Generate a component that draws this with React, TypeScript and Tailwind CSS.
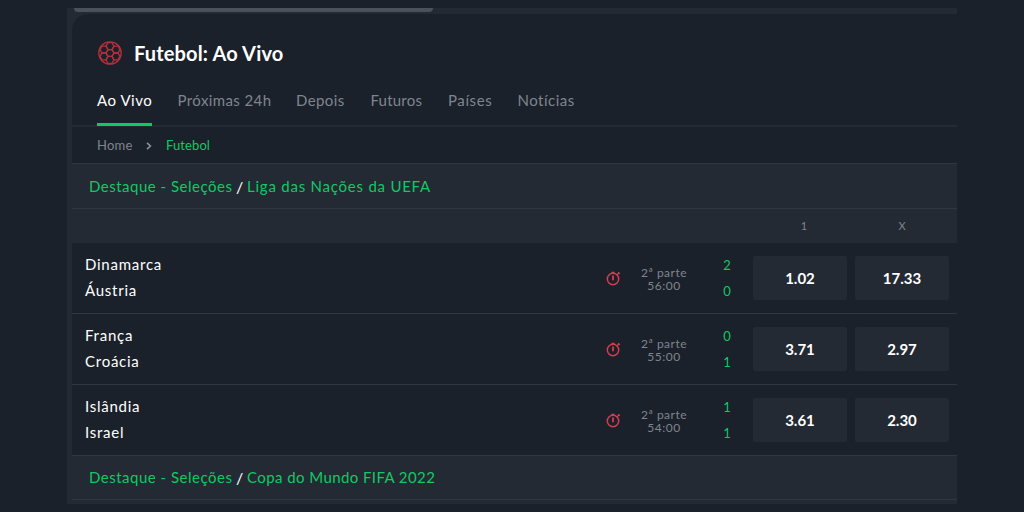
const tabs = [
  { label: "Ao Vivo", size: "w-[55px] tracking-[0.55px]" },
  { label: "Próximas 24h", size: "w-[93px] tracking-[0.4px]" },
  { label: "Depois", size: "w-[49px] tracking-[0.4px]" },
  { label: "Futuros", size: "w-[52px] tracking-[0.2px]" },
  { label: "Países", size: "w-[44px] tracking-[0.6px]" },
  { label: "Notícias", size: "w-[57px] tracking-[0.5px]" },
];

const matches = [
  { home: "Dinamarca", away: "Áustria", time: "56:00", score: [2, 0], odds: ["1.02", "17.33"] },
  { home: "França", away: "Croácia", time: "55:00", score: [0, 1], odds: ["3.71", "2.97"] },
  { home: "Islândia", away: "Israel", time: "54:00", score: [1, 1], odds: ["3.61", "2.30"] },
];

// centers of the seven cells on the ball
const cells = [
  [12, 12],
  [12, 5.1],
  [12, 18.9],
  [6, 8.55],
  [18, 8.55],
  [6, 15.45],
  [18, 15.45],
];

const BallIcon = () => (
  <svg className="h-6 w-6" viewBox="0 0 24 24" fill="none" stroke="#b52f3b" strokeWidth="1.3">
    <circle cx="12" cy="12" r="11.2" />
    {cells.map(([x, y]) => (
      <path key={`${x}-${y}`} d={`M${x - 2} ${y - 3.45}h4l2 3.45-2 3.45h-4l-2-3.45z`} />
    ))}
  </svg>
);

const TimerIcon = () => (
  <svg className="h-[15px] w-[15px]" viewBox="0 0 15 15" fill="none" stroke="#d63c50" strokeWidth="1.5">
    <circle cx="7" cy="8" r="5.7" />
    <path d="M5.4 1.4h3.2M10.9 4l2-2M12.2 1.2l1.6 1.6" strokeWidth="1.3" />
    <path d="M7 4.6v4.6" strokeWidth="1.8" />
  </svg>
);

const LeagueTitle = ({ league, size }: { league: string; size: string }) => (
  <h2 className={`flex items-center border-t border-[#303741] pl-[17px] text-[15px] text-[#11c964] ${size}`}>
    <span className="w-[147px] whitespace-nowrap tracking-[0.5px]">Destaque - Seleções</span>
    <span className="w-[11px] text-base tracking-normal text-white">/</span>
    <span className="whitespace-nowrap">{league}</span>
  </h2>
);

const App = () => {
  return (
    <main className="h-[512px] overflow-hidden bg-[#1b212a] pt-2 font-['Lato','Noto_Sans',sans-serif]">
      <div className="ml-[67px] h-[496px] w-[890px] overflow-hidden bg-[#242a33] pl-[5px]">
        <div className="h-1.5 pl-0.5">
          <div className="h-1 w-[359px] rounded-b bg-[#4b515b]" />
        </div>
        <header className="rounded-tl-2xl bg-[#1b212a]">
          <div className="flex h-[77px] items-center pl-[26px]">
            <BallIcon />
            <h1 className="ml-3 text-[20px] font-bold tracking-[0.15px] text-white">Futebol: Ao Vivo</h1>
          </div>
          <nav className="flex h-9 gap-[25.5px] border-b-2 border-[#252b34] pl-[25px] text-[15px] text-[#7f858e]">
            {tabs.map((tab, i) => (
              <a
                key={tab.label}
                className={`h-[35px] whitespace-nowrap leading-[18px] ${tab.size} ${
                  i === 0 ? "border-b-[3px] border-[#11c964] text-white" : ""
                }`}
              >
                {tab.label}
              </a>
            ))}
          </nav>
          <div className="flex h-9 items-center pl-[25px] pt-0.5 text-[13px] text-[#7f858e]">
            <span className="w-[49px] tracking-[0.2px]">Home</span>
            <svg className="h-2 w-1.5" viewBox="0 0 6 8" fill="none" stroke="#8b9099" strokeWidth="1.6">
              <path d="m1 .8 3.4 3.2L1 7.2" />
            </svg>
            <span className="ml-[14px] tracking-[0.1px] text-[#11c964]">Futebol</span>
          </div>
        </header>

        <LeagueTitle league="Liga das Nações da UEFA" size="h-[45px] pt-px tracking-[0.77px]" />
        <div className="flex h-[35px] items-center justify-end border-t border-[#303741] pr-2 text-[11px] text-[#7f858e]">
          <span className="w-[102px] text-center">1</span>
          <span className="w-[94px] text-center">X</span>
        </div>
        {matches.map((match, i) => (
          <div
            key={match.home}
            className={`flex items-center bg-[#1b212a] pl-[13px] ${
              i === 0 ? "h-[70px]" : "h-[71px] border-t border-[#303741]"
            }`}
          >
            <div className="w-[521px] pb-0.5 text-[15px] leading-[26.5px] tracking-[0.75px] text-white">
              <p>{match.home}</p>
              <p>{match.away}</p>
            </div>
            <TimerIcon />
            <div className="ml-4 w-[54px] pt-0.5 text-center text-[12px] leading-[13px] tracking-[0.5px] text-[#7f858e]">
              <p>2ª parte</p>
              <p>{match.time}</p>
            </div>
            <div className="ml-[26px] w-5 text-center text-[13px] leading-[26.5px] text-[#11c964]">
              <p>{match.score[0]}</p>
              <p>{match.score[1]}</p>
            </div>
            <div className="ml-4 flex gap-2 text-[15px] font-bold text-white">
              {match.odds.map((odd) => (
                <button key={odd} className="h-11 w-[94px] rounded-xs bg-[#242a33]">
                  {odd}
                </button>
              ))}
            </div>
          </div>
        ))}
        <LeagueTitle league="Copa do Mundo FIFA 2022" size="h-11 tracking-[0.42px]" />
        <div className="border-t border-[#303741]" />
      </div>
    </main>
  );
};

export default App;
